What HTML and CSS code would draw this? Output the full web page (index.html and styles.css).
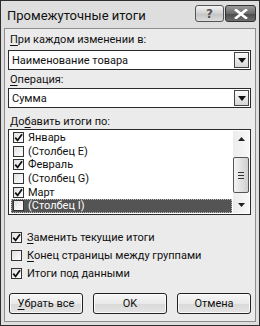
FILE: index.html
```html
<!DOCTYPE html>
<html lang="ru">
<head>
<meta charset="utf-8">
<link rel="stylesheet" href="styles.css">
</head>
<body>
<div class="window">
  <div class="titlebar">
    <span class="title">Промежуточные итоги</span>
    <div class="tbtns">
      <span class="tbtn help">?</span>
      <span class="tbtn close"><svg width="14" height="10" viewBox="0 0 14 10"><path d="M2 1 L12 9 M12 1 L2 9" stroke="#fff" stroke-width="2.6" stroke-linecap="square"/></svg></span>
    </div>
  </div>
  <div class="content">
    <div class="lbl lbl1"><u>П</u>ри каждом изменении в:</div>
    <div class="combo"><span class="ctext">Наименование товара</span><span class="drop"><svg width="8" height="5" viewBox="0 0 8 5"><path d="M0 0 H8 L4 5 Z" fill="#111"/></svg></span></div>
    <div class="lbl lbl2"><u>О</u>перация:</div>
    <div class="combo"><span class="ctext">Сумма</span><span class="drop"><svg width="8" height="5" viewBox="0 0 8 5"><path d="M0 0 H8 L4 5 Z" fill="#111"/></svg></span></div>
    <div class="lbl lbl3">До<u>б</u>авить итоги по:</div>
    <div class="listbox">
      <div class="items">
        <div class="item"><span class="cb on"></span>Январь</div>
        <div class="item"><span class="cb"></span>(Столбец E)</div>
        <div class="item"><span class="cb on"></span>Февраль</div>
        <div class="item"><span class="cb"></span>(Столбец G)</div>
        <div class="item"><span class="cb on"></span>Март</div>
        <div class="item sel"><span class="cb"></span>(Столбец I)</div>
      </div>
      <div class="scroll">
        <span class="arrow"><svg width="7" height="4" viewBox="0 0 7 4"><path d="M0 4 H7 L3.5 0 Z" fill="#222"/></svg></span>
        <span class="track"><span class="thumb"><span class="grip"></span><span class="grip"></span><span class="grip"></span></span></span>
        <span class="arrow"><svg width="7" height="4" viewBox="0 0 7 4"><path d="M0 0 H7 L3.5 4 Z" fill="#222"/></svg></span>
      </div>
    </div>
    <div class="checks">
      <div class="chk"><span class="cb on"></span><span><u>З</u>аменить текущие итоги</span></div>
      <div class="chk"><span class="cb"></span><span><u>К</u>онец страницы между группами</span></div>
      <div class="chk"><span class="cb on"></span><span>Итоги под данными</span></div>
    </div>
    <div class="buttons">
      <span class="btn"><u>У</u>брать все</span>
      <span class="btn">OK</span>
      <span class="btn">Отмена</span>
    </div>
  </div>
</div>
</body>
</html>
```

FILE: styles.css
```css
* { box-sizing: border-box; }
html, body { margin: 0; padding: 0; }
body {
  width: 260px;
  height: 326px;
  font-family: Roboto, "Noto Sans", sans-serif;
  font-size: 11px;
  color: #111;
  background: #fff;
}
.window {
  width: 260px;
  height: 326px;
  border: 1px solid #2e2e2e;
  background: #dedede;
  padding: 0 3px 3px 3px;
  display: flex;
  flex-direction: column;
}
.titlebar {
  height: 27px;
  flex: none;
  display: flex;
  align-items: flex-start;
  justify-content: space-between;
  padding: 0 0 0 3px;
}
.title {
  font-size: 13px;
  line-height: 16px;
  margin-top: 7px;
  color: #111;
}
.tbtns {
  display: flex;
  gap: 1px;
  margin-top: 4px;
}
.tbtn {
  height: 17px;
  display: flex;
  align-items: center;
  justify-content: center;
  border: 1px solid #555;
  border-radius: 3px;
}
.help {
  width: 29px;
  background: linear-gradient(#f4f4f4, #d0d0d0 50%, #c2c2c2 51%, #dcdcdc);
  font-family: "DejaVu Sans", sans-serif;
  font-weight: bold;
  font-size: 12px;
  color: #555;
}
.close {
  width: 31px;
  background: linear-gradient(#9a9a9a, #6a6a6a 50%, #4a4a4a 51%, #6e6e6e);
  border-color: #333;
}
.content {
  flex: 1;
  border: 1px solid #8e8e8e;
  background: #ebebeb;
  padding: 0 4px 0 3px;
  display: flex;
  flex-direction: column;
}
.lbl {
  line-height: 14px;
  padding-left: 2px;
}
.lbl1 { margin-top: 4px; margin-bottom: 3px; }
.lbl2 { margin-top: 3px; margin-bottom: 1px; }
.lbl3 { margin-top: 7px; margin-bottom: 0; }
u { text-decoration: underline; text-underline-offset: 2px; }
.combo {
  height: 20px;
  border: 1px solid #2a2a2a;
  background: #fff;
  display: flex;
  align-items: center;
  justify-content: space-between;
  padding: 0 1px 0 3px;
}
.drop {
  width: 15px;
  height: 16px;
  border: 1px solid #444;
  background: linear-gradient(#fafafa, #d6d6d6);
  display: flex;
  align-items: center;
  justify-content: center;
}
.listbox {
  height: 86px;
  border: 1px solid #2a2a2a;
  background: #fff;
  display: flex;
  padding: 1px 1px 1px 1px;
}
.items {
  flex: 1;
  padding-left: 1px;
  padding-right: 1px;
}
.item {
  height: 13.6px;
  display: flex;
  align-items: center;
  gap: 4px;
  padding-left: 2px;
  white-space: nowrap;
}
.item.sel {
  background: #545454;
  color: #fff;
  outline: 1px dotted #bbb;
  outline-offset: -1px;
}
.cb {
  width: 11px;
  height: 11px;
  flex: none;
  border: 1px solid #333;
  background: linear-gradient(135deg, #e0e0e0, #fff);
  position: relative;
}
.cb.on::after {
  content: "";
  position: absolute;
  left: 0;
  top: 0;
  width: 9px;
  height: 9px;
  background: url("data:image/svg+xml;utf8,<svg xmlns='http://www.w3.org/2000/svg' width='9' height='9' viewBox='0 0 9 9'><path d='M1.2 4.6 L3.6 7.4 L8 1.2' fill='none' stroke='%23111' stroke-width='1.8'/></svg>") no-repeat;
}
.scroll {
  width: 16px;
  flex: none;
  display: flex;
  flex-direction: column;
  align-items: center;
  background: linear-gradient(90deg, #ececec, #f8f8f8);
}
.arrow {
  height: 16px;
  display: flex;
  align-items: center;
  justify-content: center;
  flex: none;
}
.track {
  flex: 1;
  display: flex;
  flex-direction: column;
  justify-content: flex-end;
  width: 100%;
  padding-bottom: 4px;
}
.thumb {
  height: 36px;
  border: 1px solid #555;
  border-radius: 2px;
  background: linear-gradient(90deg, #f4f4f4, #cfcfcf);
  display: flex;
  flex-direction: column;
  align-items: center;
  justify-content: center;
  gap: 2px;
}
.grip {
  width: 6px;
  height: 1px;
  background: #333;
}
.checks {
  margin-top: 13px;
  display: flex;
  flex-direction: column;
}
.chk {
  height: 18px;
  display: flex;
  align-items: center;
  gap: 5px;
  padding-left: 3px;
}
.buttons {
  margin-top: 11px;
  display: flex;
  gap: 10px;
  padding-left: 1px;
}
.btn {
  width: 74px;
  height: 21px;
  border: 1px solid #222;
  border-radius: 3px;
  background: linear-gradient(#f7f7f7, #e9e9e9 50%, #d9d9d9 51%, #e4e4e4);
  display: flex;
  align-items: center;
  justify-content: center;
  box-shadow: inset 0 0 0 1px #fafafa;
}
```
